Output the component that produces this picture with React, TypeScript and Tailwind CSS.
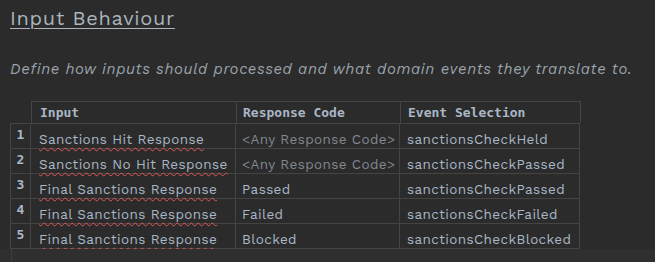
const ROWS = [
  { n: 1, input: "Sanctions Hit Response", code: "<Any Response Code>", event: "sanctionsCheckHeld", any: true },
  { n: 2, input: "Sanctions No Hit Response", code: "<Any Response Code>", event: "sanctionsCheckPassed", any: true },
  { n: 3, input: "Final Sanctions Response", code: "Passed", event: "sanctionsCheckPassed", any: false },
  { n: 4, input: "Final Sanctions Response", code: "Failed", event: "sanctionsCheckFailed", any: false },
  { n: 5, input: "Final Sanctions Response", code: "Blocked", event: "sanctionsCheckBlocked", any: false },
];

const sans = "font-['Work_Sans','Open_Sans','Liberation_Sans',sans-serif]";
const mono = "font-['DejaVu_Sans_Mono','Liberation_Mono',monospace]";

export default function App() {
  return (
    <div className={`w-[655px] h-[262px] bg-[#2b2b2b] overflow-hidden text-[#a9b7c6] ${sans}`}>
      <div className="pl-[10px] pt-[4px]">
        <h1 className="text-[20px] leading-[28px] tracking-[0.7px] underline underline-offset-[3px] decoration-1 text-[#a9b4bd] inline-block">Input Behaviour</h1>
        <p className="mt-[27px] italic text-[15px] leading-[20px] tracking-[0.62px] text-[#9aa4ad]">Define how inputs should processed and what domain events they translate to.</p>
      </div>

      <div className="mt-[22px] flex flex-col">
        <div className="flex pl-[31px]">
          <div className={`flex border-t border-l border-[#444444] ${mono} font-bold text-[13px] text-[#a9b7c6]`}>
            <div className="w-[205px] h-[21px] pl-[8px] flex items-center border-r border-[#444444]">Input</div>
            <div className="w-[164px] h-[21px] pl-[6px] flex items-center border-r border-[#444444]">Response Code</div>
            <div className="w-[180px] h-[21px] pl-[7px] flex items-center border-r border-[#444444]">Event Selection</div>
          </div>
        </div>
        <div className="pl-[10px]">
          {ROWS.map((r) => (
            <div key={r.n} className="flex h-[25px] border-t border-[#444444] w-[570px] text-[13.5px] tracking-[0.38px]">
              <div className={`w-[21px] border-l border-r border-[#444444] flex items-center justify-center ${mono} font-bold text-[13px] text-[#a9b7c6] pb-[3px]`}>{r.n}</div>
              <div className="w-[205px] border-r border-[#444444] pl-[8px] pt-[5px]">
                <span className="underline decoration-wavy decoration-[#e05555] decoration-1 underline-offset-[3px]">{r.input}</span>
              </div>
              <div className={`w-[164px] border-r border-[#444444] pl-[6px] pt-[5px] whitespace-nowrap ${r.any ? "text-[#808890]" : "text-[#a9b7c6]"}`}>{r.code}</div>
              <div className="w-[180px] border-r border-[#444444] pl-[7px] pt-[5px]">{r.event}</div>
            </div>
          ))}
          <div className="w-[570px] border-t border-[#444444]" />
        </div>
        <div className="h-[20px] bg-[#2f2f2f] pl-[11px]">
          <div className="h-full w-[22px] border-l border-[#3a3f3a]" />
        </div>
      </div>
    </div>
  );
}
